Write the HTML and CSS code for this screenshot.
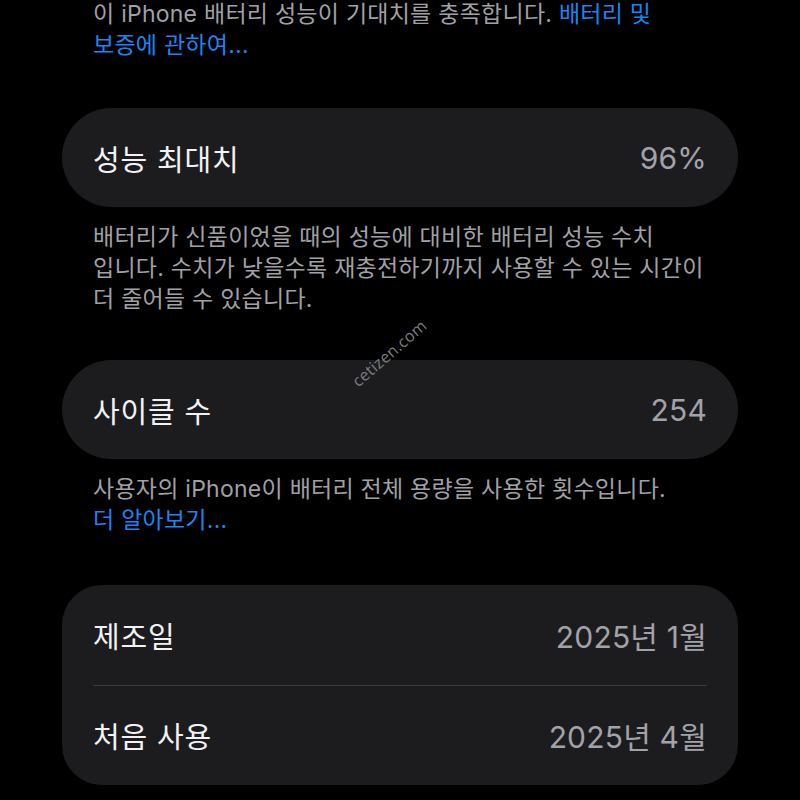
FILE: index.html
```html
<!DOCTYPE html>
<html lang="ko">
<head>
<meta charset="utf-8">
<title>배터리 성능 상태</title>
<link rel="stylesheet" href="styles.css">
</head>
<body>
<main class="page">
  <p class="note note-top">이 iPhone 배터리 성능이 기대치를 충족합니다. <a class="link" href="#">배터리 및<br>보증에 관하여...</a></p>

  <section class="card pill">
    <div class="row">
      <span class="label">성능 최대치</span>
      <span class="value">96%</span>
    </div>
  </section>
  <p class="note note-mid">배터리가 신품이었을 때의 성능에 대비한 배터리 성능 수치<br>입니다. 수치가 낮을수록 재충전하기까지 사용할 수 있는 시간이<br>더 줄어들 수 있습니다.</p>

  <section class="card pill">
    <div class="row">
      <span class="label">사이클 수</span>
      <span class="value">254</span>
    </div>
  </section>
  <p class="note note-low">사용자의 iPhone이 배터리 전체 용량을 사용한 횟수입니다.<br><a class="link" href="#">더 알아보기...</a></p>

  <section class="card group">
    <div class="row">
      <span class="label">제조일</span>
      <span class="value">2025년 1월</span>
    </div>
    <div class="sep"></div>
    <div class="row">
      <span class="label">처음 사용</span>
      <span class="value">2025년 4월</span>
    </div>
  </section>

  <div class="watermark">cetizen.com</div>
</main>
</body>
</html>
```

FILE: styles.css
```css
html, body {
  margin: 0;
  padding: 0;
  background: #000;
}

body {
  font-family: "Inter", "Noto Sans CJK KR", "Noto Sans", sans-serif;
  color: #f2f2f7;
  overflow: hidden;
  height: 800px;
}

.page {
  position: relative;
  padding: 0 62px;
  display: flex;
  flex-direction: column;
}

.note {
  margin: 0;
  padding: 0 31px;
  font-size: 23px;
  line-height: 31px;
  color: #a0a0a6;
  white-space: nowrap;
  letter-spacing: 0.25px;
}

.note-top {
  margin-top: -1.5px;
  margin-bottom: 47.5px;
}

.note-mid {
  margin-top: 15px;
  margin-bottom: 45px;
}

.note-low {
  margin-top: 15px;
  margin-bottom: 49px;
}

.link {
  color: #1e84f2;
  text-decoration: none;
}

.card {
  background: #1c1c1e;
}

.pill {
  border-radius: 50px;
}

.group {
  border-radius: 40px;
}

.row {
  height: 99px;
  padding: 0 31px;
  display: flex;
  align-items: center;
  justify-content: space-between;
}

.group .row {
  height: 99.5px;
}

.label {
  font-size: 29px;
  color: #f2f2f5;
  letter-spacing: 0.8px;
}

.value {
  font-size: 30px;
  color: #a2a2a8;
  letter-spacing: 0.2px;
}

.sep {
  height: 1px;
  margin: 0 31px;
  background: #3a3a3d;
}

.watermark {
  position: absolute;
  left: 343px;
  top: 342px;
  font-family: "Open Sans", "DejaVu Sans", sans-serif;
  font-size: 16px;
  color: #7c7c80;
  transform: rotate(-41deg);
  transform-origin: 50% 50%;
  letter-spacing: 0.3px;
}
```
